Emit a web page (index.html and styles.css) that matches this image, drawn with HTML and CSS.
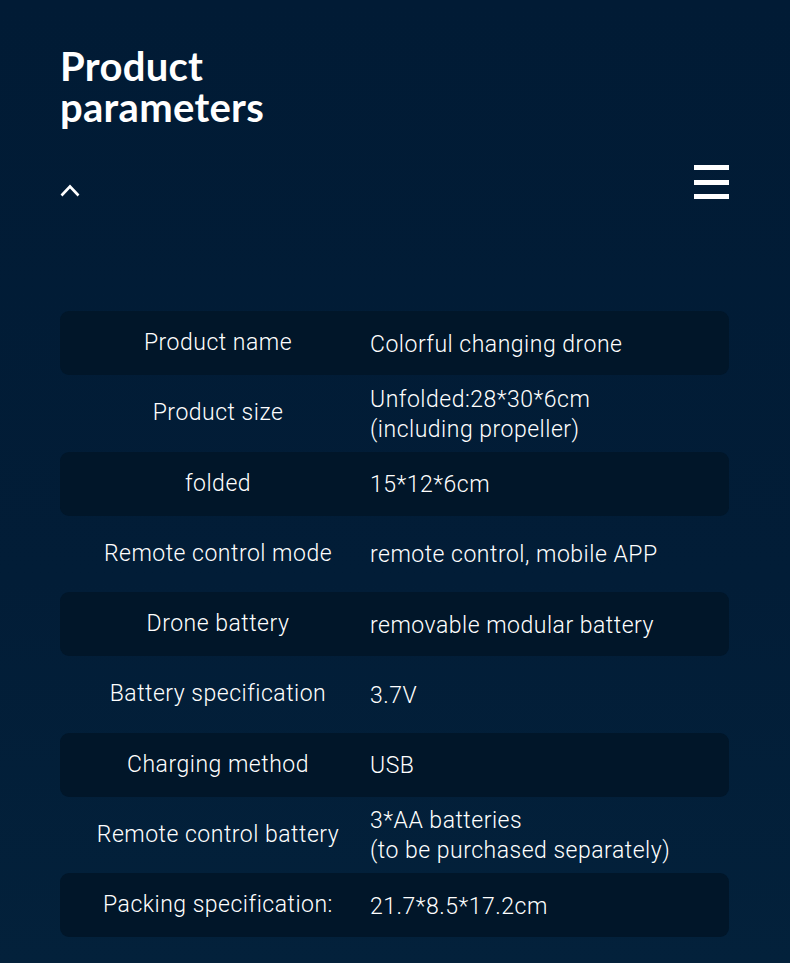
FILE: index.html
```html
<!DOCTYPE html>
<html lang="en">
<head>
<meta charset="utf-8">
<title>Product parameters</title>
<link rel="stylesheet" href="styles.css">
</head>
<body>
<main class="page">
  <h1 class="title"><span class="line">Product</span><span class="line">parameters</span></h1>
  <div class="toolbar">
    <svg class="chevron" width="20" height="13" viewBox="0 0 20 13"><path d="M1.5 11.5 L10 2.5 L18.5 11.5" fill="none" stroke="#fff" stroke-width="2.6"/></svg>
    <div class="burger"><span></span><span></span><span></span></div>
  </div>
  <div class="table">
    <div class="row dark"><div class="label">Product name</div><div class="value">Colorful changing drone</div></div>
    <div class="row"><div class="label">Product size</div><div class="value">Unfolded:28*30*6cm<br>(including propeller)</div></div>
    <div class="row dark"><div class="label">folded</div><div class="value">15*12*6cm</div></div>
    <div class="row"><div class="label">Remote control mode</div><div class="value">remote control, mobile APP</div></div>
    <div class="row dark"><div class="label">Drone battery</div><div class="value">removable modular battery</div></div>
    <div class="row"><div class="label">Battery specification</div><div class="value">3.7V</div></div>
    <div class="row dark"><div class="label">Charging method</div><div class="value">USB</div></div>
    <div class="row"><div class="label">Remote control battery</div><div class="value">3*AA batteries<br>(to be purchased separately)</div></div>
    <div class="row dark"><div class="label">Packing specification:</div><div class="value">21.7*8.5*17.2cm</div></div>
  </div>
</main>
</body>
</html>
```
FILE: styles.css
```css
html, body {
  margin: 0;
  padding: 0;
}
body {
  background: linear-gradient(180deg, #011b35 0%, #021d37 60%, #03213b 100%);
  color: #fff;
  font-family: "Roboto", "Open Sans", sans-serif;
  min-height: 963px;
}
.page {
  padding: 46px 61px 0 60px;
}
.title {
  margin: 0;
  font-family: "Lato", sans-serif;
  font-weight: 700;
  font-size: 40px;
  line-height: 41px;
  letter-spacing: 0.3px;
}
.title .line {
  display: block;
  height: 41px;
}
.toolbar {
  display: flex;
  justify-content: space-between;
  align-items: flex-start;
  margin-top: 34px;
  height: 149px;
}
.chevron {
  margin-top: 22px;
  display: block;
}
.burger {
  display: flex;
  flex-direction: column;
  gap: 9.5px;
  width: 35px;
  margin-top: 3px;
}
.burger span {
  display: block;
  height: 5px;
  background: #fff;
}
.table {
  display: flex;
  flex-direction: column;
  gap: 6.25px;
}
.row {
  display: grid;
  grid-template-columns: 304px 1fr;
  align-items: center;
  height: 64px;
  padding-left: 6px;
  border-radius: 9px;
  font-size: 23px;
  line-height: 30px;
  font-weight: 300;
  letter-spacing: 0.5px;
}
.row.dark {
  background: #011629;
}
.label {
  text-align: center;
}
.value {
  padding-top: 3px;
}
```
